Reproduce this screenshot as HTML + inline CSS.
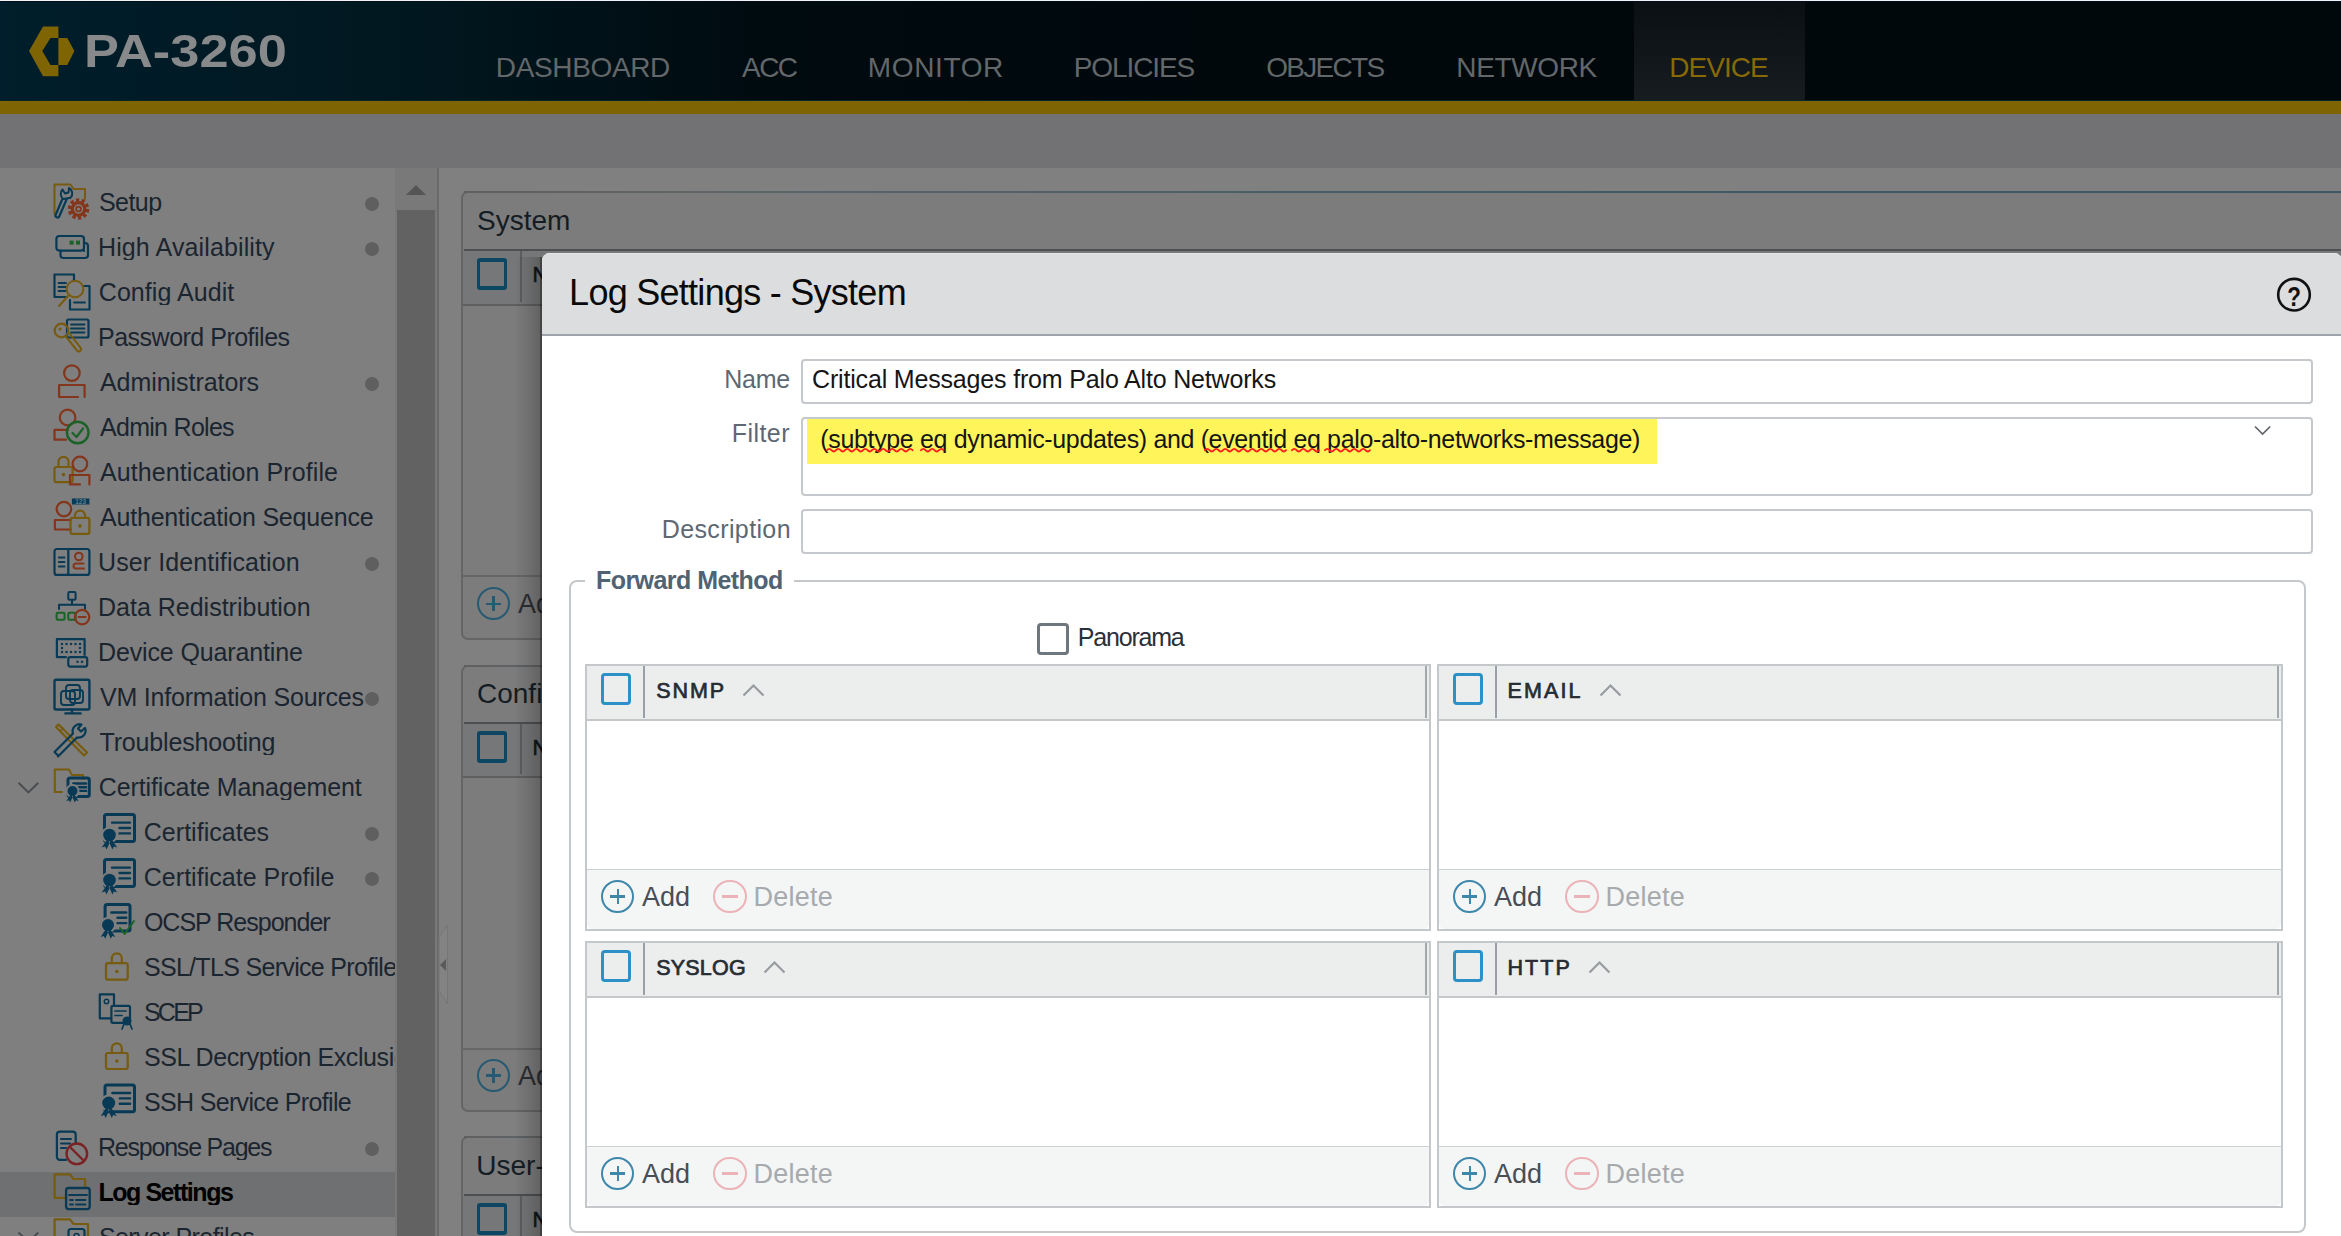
<!DOCTYPE html>
<html><head><meta charset="utf-8"><title>Log Settings - System</title>
<style>
html,body{margin:0;padding:0;}
body{width:2341px;height:1236px;position:relative;overflow:hidden;background:#808080;font-family:"Liberation Sans", sans-serif;}
.t{position:absolute;line-height:1;white-space:nowrap;font-family:"Liberation Sans", sans-serif;}
</style></head><body>
<div style="position:absolute;left:0px;top:0px;width:2341px;height:101px;background:linear-gradient(90deg,#001e2b 0px,#01171f 420px,#000b10 760px,#00080c 1200px,#00080c 2341px);"></div>
<div style="position:absolute;left:1634px;top:0px;width:171px;height:101px;background:linear-gradient(180deg,#090f13 0%,#161c20 100%);"></div>
<div style="position:absolute;left:0px;top:0px;width:2341px;height:1px;background:#f2f2f4;"></div>
<div style="position:absolute;left:0px;top:1px;width:2341px;height:1px;background:#000f1c;"></div>
<div style="position:absolute;left:0px;top:100px;width:2341px;height:1px;background:#06262c;"></div>
<div style="position:absolute;left:0px;top:101px;width:2341px;height:13px;background:#7f6403;"></div>
<div style="position:absolute;left:0px;top:114px;width:2341px;height:54px;background:#727274;"></div>
<svg style="position:absolute;left:0px;top:0px;" width="300" height="100" viewBox="0 0 300 100"><polygon fill="#7f6404" points="43,26.6 58.4,26.6 58.4,38 50.5,38 42.3,51 50.5,65 58.4,65 58.4,76.2 43,76.2 29,51"/><polygon fill="#7f6404" points="58.4,38 67.3,38 74.4,51 67.3,65 58.4,65"/></svg>
<div class="t" style="left:83.6px;top:28.0px;font-size:46.5px;color:#87898a;font-weight:700;letter-spacing:0.00px;transform:scaleX(1.1260);transform-origin:0 0;">PA-3260</div>
<div class="t" style="left:495.8px;top:54.1px;font-size:28px;color:#63676a;font-weight:400;letter-spacing:-0.36px;">DASHBOARD</div>
<div class="t" style="left:742.0px;top:54.1px;font-size:28px;color:#63676a;font-weight:400;letter-spacing:-1.55px;">ACC</div>
<div class="t" style="left:867.8px;top:54.1px;font-size:28px;color:#63676a;font-weight:400;letter-spacing:0.63px;">MONITOR</div>
<div class="t" style="left:1073.8px;top:54.1px;font-size:28px;color:#63676a;font-weight:400;letter-spacing:-1.10px;">POLICIES</div>
<div class="t" style="left:1266.2px;top:54.1px;font-size:28px;color:#63676a;font-weight:400;letter-spacing:-1.70px;">OBJECTS</div>
<div class="t" style="left:1456.3px;top:54.1px;font-size:28px;color:#63676a;font-weight:400;letter-spacing:-0.37px;">NETWORK</div>
<div class="t" style="left:1669.2px;top:54.1px;font-size:28px;color:#876906;font-weight:400;letter-spacing:-0.94px;">DEVICE</div>
<div style="position:absolute;left:0px;top:168px;width:395px;height:1068px;background:#7f7f7f;"></div>
<div style="position:absolute;left:395px;top:168px;width:42px;height:1068px;background:#797979;"></div>
<div style="position:absolute;left:397px;top:210px;width:38px;height:1026px;background:#626262;"></div>
<svg style="position:absolute;left:400px;top:180px;" width="32" height="20" viewBox="0 0 32 20"><polygon fill="#555" points="5.9,15 16,4.9 26.1,15"/></svg>
<div style="position:absolute;left:437px;top:168px;width:2px;height:1068px;background:#6a6a6a;"></div>
<div style="position:absolute;left:0px;top:1172px;width:395px;height:45px;background:#6f7071;"></div>
<div class="t" style="left:98.9px;top:189.8px;font-size:25px;color:#1b2530;font-weight:400;letter-spacing:-0.53px;width:296.1px;overflow:hidden;">Setup</div>
<div style="position:absolute;left:365px;top:197px;width:14px;height:14px;background:#5f5f5f;border-radius:50%;"></div>
<div class="t" style="left:98.0px;top:234.8px;font-size:25px;color:#1b2530;font-weight:400;letter-spacing:0.12px;width:297.0px;overflow:hidden;">High Availability</div>
<div style="position:absolute;left:365px;top:242px;width:14px;height:14px;background:#5f5f5f;border-radius:50%;"></div>
<div class="t" style="left:98.8px;top:279.8px;font-size:25px;color:#1b2530;font-weight:400;letter-spacing:0.06px;width:296.2px;overflow:hidden;">Config Audit</div>
<div class="t" style="left:98.0px;top:324.8px;font-size:25px;color:#1b2530;font-weight:400;letter-spacing:-0.50px;width:297.0px;overflow:hidden;">Password Profiles</div>
<div class="t" style="left:100.0px;top:369.8px;font-size:25px;color:#1b2530;font-weight:400;letter-spacing:-0.05px;width:295.0px;overflow:hidden;">Administrators</div>
<div style="position:absolute;left:365px;top:377px;width:14px;height:14px;background:#5f5f5f;border-radius:50%;"></div>
<div class="t" style="left:100.0px;top:414.8px;font-size:25px;color:#1b2530;font-weight:400;letter-spacing:-0.71px;width:295.0px;overflow:hidden;">Admin Roles</div>
<div class="t" style="left:100.0px;top:459.8px;font-size:25px;color:#1b2530;font-weight:400;letter-spacing:0.08px;width:295.0px;overflow:hidden;">Authentication Profile</div>
<div class="t" style="left:100.0px;top:504.8px;font-size:25px;color:#1b2530;font-weight:400;letter-spacing:-0.20px;width:295.0px;overflow:hidden;">Authentication Sequence</div>
<div class="t" style="left:98.1px;top:549.8px;font-size:25px;color:#1b2530;font-weight:400;letter-spacing:0.08px;width:296.9px;overflow:hidden;">User Identification</div>
<div style="position:absolute;left:365px;top:557px;width:14px;height:14px;background:#5f5f5f;border-radius:50%;"></div>
<div class="t" style="left:98.0px;top:594.8px;font-size:25px;color:#1b2530;font-weight:400;letter-spacing:-0.00px;width:297.0px;overflow:hidden;">Data Redistribution</div>
<div class="t" style="left:98.0px;top:639.8px;font-size:25px;color:#1b2530;font-weight:400;letter-spacing:-0.13px;width:297.0px;overflow:hidden;">Device Quarantine</div>
<div class="t" style="left:100.0px;top:684.8px;font-size:25px;color:#1b2530;font-weight:400;letter-spacing:-0.20px;width:295.0px;overflow:hidden;">VM Information Sources</div>
<div style="position:absolute;left:365px;top:692px;width:14px;height:14px;background:#5f5f5f;border-radius:50%;"></div>
<div class="t" style="left:99.5px;top:729.8px;font-size:25px;color:#1b2530;font-weight:400;letter-spacing:-0.17px;width:295.5px;overflow:hidden;">Troubleshooting</div>
<div class="t" style="left:98.8px;top:774.8px;font-size:25px;color:#1b2530;font-weight:400;letter-spacing:-0.12px;width:296.2px;overflow:hidden;">Certificate Management</div>
<div class="t" style="left:143.8px;top:819.8px;font-size:25px;color:#1b2530;font-weight:400;letter-spacing:0.02px;width:251.2px;overflow:hidden;">Certificates</div>
<div style="position:absolute;left:365px;top:827px;width:14px;height:14px;background:#5f5f5f;border-radius:50%;"></div>
<div class="t" style="left:143.8px;top:864.8px;font-size:25px;color:#1b2530;font-weight:400;letter-spacing:0.02px;width:251.2px;overflow:hidden;">Certificate Profile</div>
<div style="position:absolute;left:365px;top:872px;width:14px;height:14px;background:#5f5f5f;border-radius:50%;"></div>
<div class="t" style="left:143.9px;top:909.8px;font-size:25px;color:#1b2530;font-weight:400;letter-spacing:-0.99px;width:251.1px;overflow:hidden;">OCSP Responder</div>
<div class="t" style="left:143.9px;top:954.8px;font-size:25px;color:#1b2530;font-weight:400;letter-spacing:-0.68px;width:251.1px;overflow:hidden;">SSL/TLS Service Profile</div>
<div class="t" style="left:143.9px;top:999.8px;font-size:25px;color:#1b2530;font-weight:400;letter-spacing:-2.74px;width:251.1px;overflow:hidden;">SCEP</div>
<div class="t" style="left:143.9px;top:1044.8px;font-size:25px;color:#1b2530;font-weight:400;letter-spacing:-0.41px;width:251.1px;overflow:hidden;">SSL Decryption Exclusion</div>
<div class="t" style="left:143.9px;top:1089.8px;font-size:25px;color:#1b2530;font-weight:400;letter-spacing:-0.65px;width:251.1px;overflow:hidden;">SSH Service Profile</div>
<div class="t" style="left:98.0px;top:1134.8px;font-size:25px;color:#1b2530;font-weight:400;letter-spacing:-1.22px;width:297.0px;overflow:hidden;">Response Pages</div>
<div style="position:absolute;left:365px;top:1142px;width:14px;height:14px;background:#5f5f5f;border-radius:50%;"></div>
<div class="t" style="left:98.4px;top:1179.8px;font-size:25px;color:#000000;font-weight:700;letter-spacing:-1.44px;width:296.6px;overflow:hidden;">Log Settings</div>
<div class="t" style="left:98.9px;top:1224.8px;font-size:25px;color:#1b2530;font-weight:400;letter-spacing:-0.57px;width:296.1px;overflow:hidden;">Server Profiles</div>
<svg style="position:absolute;left:0;top:168px" width="395" height="1068" viewBox="0 168 395 1068"><path d="M54.5,214 V184.5 H70.5 L73.5,189 H85 V199" fill="none" stroke="#775b0e" stroke-width="2.04" stroke-linejoin="round" stroke-linecap="round"/><path d="M57.5,215.5 L65,198" fill="none" stroke="#083a56" stroke-width="6.2" stroke-linecap="round"/><path d="M57.5,215.5 L65,198" fill="none" stroke="#7f7f7f" stroke-width="1.8" stroke-linecap="round"/><path d="M63.5,199 a6.2,6.2 0 0 1 -1,-9.5 l2.5,4 l3.5,-1 l0.5,-4.5 a6.2,6.2 0 0 1 1.5,9.8 Z" fill="#7f7f7f" stroke="#083a56" stroke-width="2" stroke-linejoin="round"/><circle cx="78.5" cy="209" r="9" fill="none" stroke="#84361c" stroke-width="3.6" stroke-dasharray="3.3 2.35"/><circle cx="78.5" cy="209" r="6.3" fill="#7f7f7f" stroke="#84361c" stroke-width="3.2"/><circle cx="78.5" cy="209" r="2.4" fill="none" stroke="#84361c" stroke-width="1.8"/><path d="M84,250.6 V251 M60.5,250.6 V255 a3,3 0 0 0 3,3 H85 a3,3 0 0 0 3,-3 V246 a3,3 0 0 0 -3,-3 H84" fill="none" stroke="#083a56" stroke-width="2.21" stroke-linejoin="round" stroke-linecap="round"/><rect x="56.4" y="236" width="27.6" height="14.6" rx="3" fill="none" stroke="#083a56" stroke-width="2.21" stroke-linejoin="round" stroke-linecap="round"/><rect x="69.6" y="240.6" width="4" height="4" fill="#1a6226"/><rect x="76" y="240.6" width="4" height="4" fill="#1a6226"/><path d="M66,297 H54.5 V274.5 H74 V281" fill="none" stroke="#083a56" stroke-width="2.21" stroke-linejoin="round" stroke-linecap="round"/><path d="M58.5,283 H66 M58.5,287 H66 M58.5,291 H66" fill="none" stroke="#083a56" stroke-width="1.87" stroke-linejoin="round" stroke-linecap="round"/><path d="M83,286 H89.5 V309.5 H70 V300" fill="none" stroke="#083a56" stroke-width="2.21" stroke-linejoin="round" stroke-linecap="round"/><path d="M74,302.5 H85" fill="none" stroke="#083a56" stroke-width="1.87" stroke-linejoin="round" stroke-linecap="round"/><circle cx="75" cy="289" r="8.3" fill="none" stroke="#775b0e" stroke-width="2.04" stroke-linejoin="round" stroke-linecap="round"/><path d="M68.5,295.5 L59,306" fill="none" stroke="#775b0e" stroke-width="2.04" stroke-linejoin="round" stroke-linecap="round"/><rect x="67" y="319.5" width="21.5" height="18" rx="1.5" fill="none" stroke="#083a56" stroke-width="2.21" stroke-linejoin="round" stroke-linecap="round"/><path d="M71,324.5 H84.5 M71,328.5 H84.5 M71,332.5 H84.5" fill="none" stroke="#083a56" stroke-width="1.87" stroke-linejoin="round" stroke-linecap="round"/><circle cx="61.5" cy="330.5" r="6.8" fill="none" stroke="#775b0e" stroke-width="2.21" stroke-linejoin="round" stroke-linecap="round"/><path d="M65.5,336 L77,350.5 a2.2,2.2 0 0 0 3.5,-2.8 L69.5,333.5" fill="none" stroke="#775b0e" stroke-width="2.04" stroke-linejoin="round" stroke-linecap="round"/><circle cx="60" cy="329" r="1.6" fill="#775b0e"/><circle cx="71.9" cy="373.1" r="7.8" fill="none" stroke="#84361c" stroke-width="2.21" stroke-linejoin="round" stroke-linecap="round"/><path d="M78,397 H59.1 V385 H84.6 V397" fill="none" stroke="#84361c" stroke-width="2.21" stroke-linejoin="round" stroke-linecap="round"/><circle cx="67.6" cy="417.5" r="7.8" fill="none" stroke="#84361c" stroke-width="2.21" stroke-linejoin="round" stroke-linecap="round"/><path d="M66,439.7 H54.5 V429.8 H68" fill="none" stroke="#84361c" stroke-width="2.21" stroke-linejoin="round" stroke-linecap="round"/><circle cx="77.7" cy="432.5" r="10.8" fill="none" stroke="#1a6226" stroke-width="2.38" stroke-linejoin="round" stroke-linecap="round"/><path d="M72.5,433 L76.5,437 L83,428.5" fill="none" stroke="#1a6226" stroke-width="2.21" stroke-linejoin="round" stroke-linecap="round"/><path d="M58.5,467 V461.8 A5,5 0 0 1 68.5,461.8 V467" fill="none" stroke="#775b0e" stroke-width="2.21" stroke-linejoin="round" stroke-linecap="round"/><rect x="54.5" y="467" width="18.099999999999994" height="15.199999999999989" rx="2" fill="none" stroke="#775b0e" stroke-width="2.21" stroke-linejoin="round" stroke-linecap="round"/><circle cx="63.5" cy="474.6" r="1.8" fill="#775b0e"/><circle cx="79.9" cy="464" r="7.3" fill="none" stroke="#84361c" stroke-width="2.21" stroke-linejoin="round" stroke-linecap="round"/><path d="M80,484.4 H70 V475 H89.4 V484.4" fill="none" stroke="#84361c" stroke-width="2.21" stroke-linejoin="round" stroke-linecap="round"/><circle cx="63.9" cy="509.1" r="7.3" fill="none" stroke="#84361c" stroke-width="2.21" stroke-linejoin="round" stroke-linecap="round"/><path d="M71,520 H54.9 V529.5 H71" fill="none" stroke="#84361c" stroke-width="2.21" stroke-linejoin="round" stroke-linecap="round"/><path d="M75,517.9 V515.6 A5,5 0 0 1 85,515.6 V517.9" fill="none" stroke="#775b0e" stroke-width="2.21" stroke-linejoin="round" stroke-linecap="round"/><rect x="70.5" y="517.9" width="18.900000000000006" height="16.0" rx="2" fill="none" stroke="#775b0e" stroke-width="2.21" stroke-linejoin="round" stroke-linecap="round"/><circle cx="80" cy="525.9" r="1.8" fill="#775b0e"/><rect x="71.9" y="498.5" width="17.5" height="6" fill="#083a56"/><text x="80.6" y="504" text-anchor="middle" font-family="Liberation Sans" font-weight="700" font-size="6.5" fill="#5a7d90">123</text><rect x="54.5" y="549" width="34.9" height="25.9" rx="2.5" fill="none" stroke="#083a56" stroke-width="2.21" stroke-linejoin="round" stroke-linecap="round"/><path d="M68.3,549 V574.9" fill="none" stroke="#083a56" stroke-width="2.21" stroke-linejoin="round" stroke-linecap="round"/><path d="M58.8,557.5 H64.5 M58.8,562 H64.5 M58.8,566.5 H64.5" fill="none" stroke="#083a56" stroke-width="1.87" stroke-linejoin="round" stroke-linecap="round"/><circle cx="78.8" cy="556.5" r="3.8" fill="none" stroke="#84361c" stroke-width="2.04" stroke-linejoin="round" stroke-linecap="round"/><path d="M83.5,563.5 H76 a2.5,2.5 0 0 0 0,5 H84" fill="none" stroke="#84361c" stroke-width="2.04" stroke-linejoin="round" stroke-linecap="round"/><rect x="68.3" y="592" width="7.3" height="7.7" rx="1.2" fill="none" stroke="#083a56" stroke-width="2.04" stroke-linejoin="round" stroke-linecap="round"/><path d="M72,599.7 V604.7 M59,609 V604.7 H85 V609" fill="none" stroke="#083a56" stroke-width="2.04" stroke-linejoin="round" stroke-linecap="round"/><rect x="56.6" y="612.7" width="8" height="7" rx="1.2" fill="none" stroke="#1a6226" stroke-width="2.04" stroke-linejoin="round" stroke-linecap="round"/><rect x="68.3" y="612.7" width="7.3" height="7" rx="1.2" fill="none" stroke="#1a6226" stroke-width="2.04" stroke-linejoin="round" stroke-linecap="round"/><circle cx="82.1" cy="617.1" r="7.2" fill="none" stroke="#84361c" stroke-width="2.21" stroke-linejoin="round" stroke-linecap="round"/><path d="M78.5,617.1 H85.7" fill="none" stroke="#84361c" stroke-width="2.04" stroke-linejoin="round" stroke-linecap="round"/><path d="M66,657.1 H56.9 V639.2 H84.6 V655" fill="none" stroke="#083a56" stroke-width="2.21" stroke-linejoin="round" stroke-linecap="round"/><rect x="68.3" y="657.1" width="18.9" height="9.5" rx="2" fill="none" stroke="#083a56" stroke-width="2.21" stroke-linejoin="round" stroke-linecap="round"/><rect x="60.9" y="642.9" width="2.2" height="2.2" fill="#083a56"/><rect x="60.9" y="650.9" width="2.2" height="2.2" fill="#083a56"/><rect x="65.4" y="642.9" width="2.2" height="2.2" fill="#083a56"/><rect x="65.4" y="650.9" width="2.2" height="2.2" fill="#083a56"/><rect x="69.9" y="642.9" width="2.2" height="2.2" fill="#083a56"/><rect x="69.9" y="650.9" width="2.2" height="2.2" fill="#083a56"/><rect x="74.4" y="642.9" width="2.2" height="2.2" fill="#083a56"/><rect x="74.4" y="650.9" width="2.2" height="2.2" fill="#083a56"/><rect x="78.9" y="642.9" width="2.2" height="2.2" fill="#083a56"/><rect x="78.9" y="650.9" width="2.2" height="2.2" fill="#083a56"/><rect x="60.9" y="646.9" width="2.2" height="2.2" fill="#083a56"/><rect x="78.9" y="646.9" width="2.2" height="2.2" fill="#083a56"/><rect x="76.4" y="660.7" width="2.2" height="2.2" fill="#083a56"/><rect x="80.9" y="660.7" width="2.2" height="2.2" fill="#083a56"/><rect x="54.5" y="679.7" width="34.9" height="29.8" rx="1.5" fill="none" stroke="#083a56" stroke-width="2.38" stroke-linejoin="round" stroke-linecap="round"/><path d="M72,709.5 V713.4 M65.4,713.4 H80.6" fill="none" stroke="#083a56" stroke-width="2.38" stroke-linejoin="round" stroke-linecap="round"/><rect x="61" y="691" width="14" height="14" rx="3" fill="none" stroke="#083a56" stroke-width="1.87" stroke-linejoin="round" stroke-linecap="round"/><rect x="66" y="685" width="14" height="14" rx="3" fill="none" stroke="#083a56" stroke-width="1.87" stroke-linejoin="round" stroke-linecap="round"/><rect x="70" y="690" width="13" height="13" rx="3" fill="none" stroke="#083a56" stroke-width="1.87" stroke-linejoin="round" stroke-linecap="round"/><path d="M56,727 L58.5,724.5 L87,752.5 L84,755.5 Z" fill="none" stroke="#775b0e" stroke-width="2.21" stroke-linejoin="round" stroke-linecap="round"/><path d="M60,731 L63,728" fill="none" stroke="#775b0e" stroke-width="1.7" stroke-linejoin="round" stroke-linecap="round"/><path d="M57.5,755 L54.5,752 L73,733.5 M77,737.5 L58,756.5 M73,733.5 a7,7 0 0 1 8.5,-9 L78,728.5 L81,731.5 L85,728 a7,7 0 0 1 -8,9.5" fill="none" stroke="#083a56" stroke-width="2.21" stroke-linejoin="round" stroke-linecap="round"/><path d="M18.5,782.8 L28.4,792.4 L38.3,782.8" fill="none" stroke="#4a4d50" stroke-width="2"/><path d="M54.8,792 V769.5 H69 L72,775 H83 V779" fill="none" stroke="#775b0e" stroke-width="2.04" stroke-linejoin="round" stroke-linecap="round"/><path d="M54.8,792 H62" fill="none" stroke="#775b0e" stroke-width="2.04" stroke-linejoin="round" stroke-linecap="round"/><rect x="68" y="778" width="21.299999999999997" height="18.399999999999977" rx="2" fill="none" stroke="#083a56" stroke-width="3.0" stroke-linejoin="round" stroke-linecap="round"/><path d="M73.3,783.5 H86.1 M78.7,787.2 H86.1 M78.7,790.9 H86.1" fill="none" stroke="#083a56" stroke-width="2.4" stroke-linejoin="round" stroke-linecap="round"/><circle cx="72.5" cy="791" r="7" fill="#7f7f7f"/><circle cx="72.5" cy="791" r="5" fill="#083a56"/><path d="M71.0,794.1 L66.3,801.0 L69.0,800.2 L70.2,802.5 L73.3,795.6 Z M74.0,794.1 L78.7,801.0 L76.0,800.2 L74.8,802.5 L71.7,795.6 Z" fill="#083a56"/><rect x="104.5" y="814.5" width="30.0" height="27.0" rx="2" fill="none" stroke="#083a56" stroke-width="3.0" stroke-linejoin="round" stroke-linecap="round"/><path d="M112.0,822.6 H130.0 M119.5,828.0 H130.0 M119.5,833.4 H130.0" fill="none" stroke="#083a56" stroke-width="2.4" stroke-linejoin="round" stroke-linecap="round"/><circle cx="109.5" cy="835" r="8.3" fill="#7f7f7f"/><circle cx="109.5" cy="835" r="6.3" fill="#083a56"/><path d="M107.6,838.9 L101.7,847.6 L105.1,846.6 L106.6,849.5 L110.5,840.8 Z M111.4,838.9 L117.3,847.6 L113.9,846.6 L112.4,849.5 L108.5,840.8 Z" fill="#083a56"/><rect x="104.5" y="859.5" width="30.0" height="27.0" rx="2" fill="none" stroke="#083a56" stroke-width="3.0" stroke-linejoin="round" stroke-linecap="round"/><path d="M112.0,867.6 H130.0 M119.5,873.0 H130.0 M119.5,878.4 H130.0" fill="none" stroke="#083a56" stroke-width="2.4" stroke-linejoin="round" stroke-linecap="round"/><circle cx="109.5" cy="880" r="8.3" fill="#7f7f7f"/><circle cx="109.5" cy="880" r="6.3" fill="#083a56"/><path d="M107.6,883.9 L101.7,892.6 L105.1,891.6 L106.6,894.5 L110.5,885.8 Z M111.4,883.9 L117.3,892.6 L113.9,891.6 L112.4,894.5 L108.5,885.8 Z" fill="#083a56"/><rect x="105.1" y="904.5" width="24.900000000000006" height="26.600000000000023" rx="2" fill="none" stroke="#083a56" stroke-width="3.0" stroke-linejoin="round" stroke-linecap="round"/><path d="M111.3,912.5 H126.3 M117.5,917.8 H126.3 M117.5,923.1 H126.3" fill="none" stroke="#083a56" stroke-width="2.4" stroke-linejoin="round" stroke-linecap="round"/><circle cx="108" cy="925" r="8" fill="#7f7f7f"/><circle cx="108" cy="925" r="6" fill="#083a56"/><path d="M106.2,928.7 L100.6,937.0 L103.8,936.1 L105.2,938.8 L108.9,930.5 Z M109.8,928.7 L115.4,937.0 L112.2,936.1 L110.8,938.8 L107.1,930.5 Z" fill="#083a56"/><path d="M120,928 L124.5,934 L134,921" fill="none" stroke="#1a6226" stroke-width="2.04" stroke-linejoin="round" stroke-linecap="round"/><path d="M111.8,963.2 V958.4 A5,5 0 0 1 121.8,958.4 V963.2" fill="none" stroke="#775b0e" stroke-width="2.21" stroke-linejoin="round" stroke-linecap="round"/><rect x="106" y="963.2" width="21.700000000000003" height="16.5" rx="2" fill="none" stroke="#775b0e" stroke-width="2.21" stroke-linejoin="round" stroke-linecap="round"/><circle cx="116.8" cy="971.45" r="1.8" fill="#775b0e"/><path d="M111,1018.4 H99.8 V994.3 H114 V1005" fill="none" stroke="#083a56" stroke-width="2.21" stroke-linejoin="round" stroke-linecap="round"/><circle cx="106.5" cy="1001.5" r="2.2" fill="none" stroke="#083a56" stroke-width="1.53" stroke-linejoin="round" stroke-linecap="round"/><rect x="111.4" y="1005.9" width="18.6" height="16.9" rx="1.5" fill="none" stroke="#083a56" stroke-width="2.21" stroke-linejoin="round" stroke-linecap="round"/><path d="M115,1011 H126 M115,1015.5 H122" fill="none" stroke="#083a56" stroke-width="1.7" stroke-linejoin="round" stroke-linecap="round"/><circle cx="127" cy="1021" r="4.5" fill="#083a56"/><path d="M124,1024 L122,1029 M130,1024 L132,1029" fill="none" stroke="#083a56" stroke-width="1.7" stroke-linejoin="round" stroke-linecap="round"/><path d="M111.8,1053 V1048.4 A5,5 0 0 1 121.8,1048.4 V1053" fill="none" stroke="#775b0e" stroke-width="2.21" stroke-linejoin="round" stroke-linecap="round"/><rect x="106" y="1053" width="21.700000000000003" height="16" rx="2" fill="none" stroke="#775b0e" stroke-width="2.21" stroke-linejoin="round" stroke-linecap="round"/><circle cx="116.8" cy="1061.0" r="1.8" fill="#775b0e"/><rect x="105" y="1085" width="29.5" height="26.799999999999955" rx="2" fill="none" stroke="#083a56" stroke-width="3.0" stroke-linejoin="round" stroke-linecap="round"/><path d="M112.4,1093.0 H130.1 M119.8,1098.4 H130.1 M119.8,1103.8 H130.1" fill="none" stroke="#083a56" stroke-width="2.4" stroke-linejoin="round" stroke-linecap="round"/><circle cx="108.7" cy="1103" r="8.5" fill="#7f7f7f"/><circle cx="108.7" cy="1103" r="6.5" fill="#083a56"/><path d="M106.7,1107.0 L100.7,1116.0 L104.2,1115.0 L105.7,1118.0 L109.7,1109.0 Z M110.7,1107.0 L116.7,1116.0 L113.2,1115.0 L111.7,1118.0 L107.7,1109.0 Z" fill="#083a56"/><path d="M66,1159.9 H59.9 a3,3 0 0 1 -3,-3 V1134.7 a3,3 0 0 1 3,-3 H72.7 a3,3 0 0 1 3,3 V1143" fill="none" stroke="#083a56" stroke-width="2.21" stroke-linejoin="round" stroke-linecap="round"/><path d="M61,1139 H71 M61,1143.5 H70 M61,1148 H66" fill="none" stroke="#083a56" stroke-width="2.04" stroke-linejoin="round" stroke-linecap="round"/><circle cx="76.8" cy="1153.8" r="10.3" fill="none" stroke="#7a2224" stroke-width="2.38" stroke-linejoin="round" stroke-linecap="round"/><path d="M70,1147 L83.5,1160.5" fill="none" stroke="#7a2224" stroke-width="2.38" stroke-linejoin="round" stroke-linecap="round"/><path d="M66,1197.9 H54.6 V1174.4 H70 L73.5,1179 H85 V1188" fill="none" stroke="#775b0e" stroke-width="2.21" stroke-linejoin="round" stroke-linecap="round"/><rect x="66.1" y="1188" width="23.6" height="21.1" rx="2.5" fill="none" stroke="#083a56" stroke-width="2.38" stroke-linejoin="round" stroke-linecap="round"/><path d="M69,1195 H87 M70,1200 H73 M76,1200 H85.5 M70,1204.5 H73 M76,1204.5 H85.5" fill="none" stroke="#083a56" stroke-width="1.87" stroke-linejoin="round" stroke-linecap="round"/><path d="M18.5,1232.5 L28.4,1242 L38.3,1232.5" fill="none" stroke="#4a4d50" stroke-width="2"/><path d="M54.6,1240 V1219.4 H70 L73.5,1224 H88 V1240" fill="none" stroke="#775b0e" stroke-width="2.21" stroke-linejoin="round" stroke-linecap="round"/><rect x="68.5" y="1229" width="16" height="12" rx="2.5" fill="none" stroke="#083a56" stroke-width="2.21" stroke-linejoin="round" stroke-linecap="round"/><circle cx="76.5" cy="1236" r="2.5" fill="none" stroke="#083a56" stroke-width="1.7" stroke-linejoin="round" stroke-linecap="round"/></svg>
<div style="position:absolute;left:439px;top:168px;width:1902px;height:1068px;background:#808080;"></div>
<svg style="position:absolute;left:437px;top:920px;" width="14" height="90" viewBox="0 0 14 90"><polygon fill="#838383" stroke="#767676" stroke-width="1" points="2,17 10.5,5 10.5,84 2,71"/><polygon fill="#5a5a5a" points="9,39 3,45 9,51"/></svg>
<div style="position:absolute;left:461px;top:191px;width:1900px;height:449px;border:2px solid #646567;border-radius:7px;box-sizing:border-box;background:#7c7c7c;"></div>
<div style="position:absolute;left:464px;top:191px;width:1900px;height:2px;background:linear-gradient(90deg,#5e6062 0px,#5f6568 240px,#4b5f69 760px,#405865 1300px,#3e5663 1900px);"></div>
<div class="t" style="left:477.1px;top:207.1px;font-size:28px;color:#141c24;font-weight:400;letter-spacing:0.00px;">System</div>
<div style="position:absolute;left:464px;top:249px;width:1900px;height:2px;background:#4e4f51;"></div>
<div style="position:absolute;left:463px;top:251px;width:1900px;height:53px;background:#767778;"></div>
<div style="position:absolute;left:463px;top:304px;width:1900px;height:2px;background:#5e5f61;"></div>
<div style="position:absolute;left:520px;top:251px;width:2px;height:51px;background:#5c5d5f;"></div>
<div style="position:absolute;left:477px;top:258px;width:30px;height:31.7px;border:3.2px solid #0d4663;border-top-width:4.2px;border-bottom-width:4.2px;border-radius:3px;box-sizing:border-box;"></div>
<div class="t" style="left:532.5px;top:265.4px;font-size:21.5px;color:#10161c;font-weight:400;letter-spacing:0.00px;-webkit-text-stroke:0.6px #10161c;">N</div>
<div style="position:absolute;left:463px;top:575px;width:1900px;height:2px;background:#666769;"></div>
<div style="position:absolute;left:477px;top:587.2px;width:33px;height:33px;border:2.4px solid #265a72;border-radius:50%;box-sizing:border-box;"></div>
<div style="position:absolute;left:486px;top:602.6px;width:15px;height:2.2px;background:#265a72;"></div>
<div style="position:absolute;left:492.4px;top:596.2px;width:2.2px;height:15px;background:#265a72;"></div>
<div class="t" style="left:518.0px;top:590.8px;font-size:27px;color:#2a2e32;font-weight:400;letter-spacing:0.00px;">Add</div>
<div style="position:absolute;left:461px;top:665px;width:1900px;height:447px;border:2px solid #646567;border-radius:7px;box-sizing:border-box;background:#7c7c7c;"></div>
<div style="position:absolute;left:464px;top:665px;width:1900px;height:2px;background:linear-gradient(90deg,#5e6062 0px,#5f6568 240px,#4b5f69 760px,#405865 1300px,#3e5663 1900px);"></div>
<div class="t" style="left:477.0px;top:679.9px;font-size:28px;color:#141c24;font-weight:400;letter-spacing:0.00px;">Config Audit</div>
<div style="position:absolute;left:464px;top:722px;width:1900px;height:2px;background:#4e4f51;"></div>
<div style="position:absolute;left:463px;top:724px;width:1900px;height:52px;background:#767778;"></div>
<div style="position:absolute;left:463px;top:776px;width:1900px;height:2px;background:#5e5f61;"></div>
<div style="position:absolute;left:520px;top:724px;width:2px;height:50px;background:#5c5d5f;"></div>
<div style="position:absolute;left:477px;top:731px;width:30px;height:31.7px;border:3.2px solid #0d4663;border-top-width:4.2px;border-bottom-width:4.2px;border-radius:3px;box-sizing:border-box;"></div>
<div class="t" style="left:532.5px;top:738.4px;font-size:21.5px;color:#10161c;font-weight:400;letter-spacing:0.00px;-webkit-text-stroke:0.6px #10161c;">N</div>
<div style="position:absolute;left:463px;top:1048px;width:1900px;height:2px;background:#666769;"></div>
<div style="position:absolute;left:477px;top:1059.0px;width:33px;height:33px;border:2.4px solid #265a72;border-radius:50%;box-sizing:border-box;"></div>
<div style="position:absolute;left:486px;top:1074.4px;width:15px;height:2.2px;background:#265a72;"></div>
<div style="position:absolute;left:492.4px;top:1068.0px;width:2.2px;height:15px;background:#265a72;"></div>
<div class="t" style="left:518.0px;top:1062.6px;font-size:27px;color:#2a2e32;font-weight:400;letter-spacing:0.00px;">Add</div>
<div style="position:absolute;left:461px;top:1136px;width:1900px;height:164px;border:2px solid #646567;border-radius:7px;box-sizing:border-box;background:#7c7c7c;"></div>
<div style="position:absolute;left:464px;top:1136px;width:1900px;height:2px;background:linear-gradient(90deg,#5e6062 0px,#5f6568 240px,#4b5f69 760px,#405865 1300px,#3e5663 1900px);"></div>
<div class="t" style="left:476.3px;top:1151.8px;font-size:28px;color:#141c24;font-weight:400;letter-spacing:0.00px;">User-ID</div>
<div style="position:absolute;left:464px;top:1194px;width:1900px;height:2px;background:#4e4f51;"></div>
<div style="position:absolute;left:463px;top:1196px;width:1900px;height:53px;background:#767778;"></div>
<div style="position:absolute;left:463px;top:1249px;width:1900px;height:2px;background:#5e5f61;"></div>
<div style="position:absolute;left:520px;top:1196px;width:2px;height:51px;background:#5c5d5f;"></div>
<div style="position:absolute;left:477px;top:1203px;width:30px;height:31.7px;border:3.2px solid #0d4663;border-top-width:4.2px;border-bottom-width:4.2px;border-radius:3px;box-sizing:border-box;"></div>
<div class="t" style="left:532.5px;top:1210.4px;font-size:21.5px;color:#10161c;font-weight:400;letter-spacing:0.00px;-webkit-text-stroke:0.6px #10161c;">N</div>
<div style="position:absolute;left:514px;top:257px;width:28px;height:979px;background:linear-gradient(90deg,rgba(0,0,0,0) 0%,rgba(0,0,0,.08) 40%,rgba(0,0,0,.22) 100%);"></div>
<div style="position:absolute;left:540px;top:257px;width:2px;height:979px;background:rgba(0,0,0,.3);"></div>
<div style="position:absolute;left:542px;top:253px;width:1800px;height:1100px;background:#fff;border-radius:8px 8px 0 0;overflow:hidden">
<div style="position:absolute;left:0;top:0;width:1800px;height:81px;background:#dcdddf;border-bottom:2px solid #9ea4a9;"></div>
<div style="position:absolute;left:0;top:0;width:1800px;height:1px;background:#e6e7e9;"></div>
</div>
<div class="t" style="left:569.1px;top:274.5px;font-size:36px;color:#0a0a0a;font-weight:400;letter-spacing:-0.73px;">Log Settings - System</div>
<svg style="position:absolute;left:2275px;top:276px;" width="38" height="38" viewBox="0 0 38 38"><circle cx="19" cy="18.7" r="15.8" fill="none" stroke="#111" stroke-width="2.6"/><text x="19" y="29.6" transform="translate(19,0) scale(0.8,1) translate(-19,0)" text-anchor="middle" font-family="Liberation Sans" font-weight="700" font-size="28" fill="#111">?</text></svg>
<div class="t" style="left:724.3px;top:366.5px;font-size:25px;color:#5d6873;font-weight:400;letter-spacing:-0.24px;">Name</div>
<div class="t" style="left:731.8px;top:420.6px;font-size:25px;color:#5d6873;font-weight:400;letter-spacing:0.43px;">Filter</div>
<div class="t" style="left:661.8px;top:517.4px;font-size:25px;color:#5d6873;font-weight:400;letter-spacing:0.37px;">Description</div>
<div style="position:absolute;left:801px;top:359px;width:1512px;height:45px;border:2px solid #c5c8cc;border-radius:4px;box-sizing:border-box;background:#fff;"></div>
<div style="position:absolute;left:801px;top:417px;width:1512px;height:79px;border:2px solid #c5c8cc;border-radius:4px;box-sizing:border-box;background:#fff;"></div>
<div style="position:absolute;left:801px;top:509px;width:1512px;height:45px;border:2px solid #c5c8cc;border-radius:4px;box-sizing:border-box;background:#fff;"></div>
<div class="t" style="left:812.0px;top:366.5px;font-size:25px;color:#151515;font-weight:400;letter-spacing:-0.17px;">Critical Messages from Palo Alto Networks</div>
<div style="position:absolute;left:807px;top:419px;width:850px;height:45px;background:#fff55a;"></div>
<div class="t" style="left:820.3px;top:426.6px;font-size:25px;color:#151515;font-weight:400;letter-spacing:-0.35px;">(subtype eq dynamic-updates) and (eventid eq palo-alto-networks-message)</div>
<svg style="position:absolute;left:0;top:0" width="2341" height="500"><path fill="none" stroke="#ff1f1f" stroke-width="1.9" stroke-linecap="round" d="M827.0,450.2 Q829.25,447.6 831.50,450.2 Q833.75,452.8 836.00,450.2 Q838.25,447.6 840.50,450.2 Q842.75,452.8 845.00,450.2 Q847.25,447.6 849.50,450.2 Q851.75,452.8 854.00,450.2 Q856.25,447.6 858.50,450.2 Q860.75,452.8 863.00,450.2 Q865.25,447.6 867.50,450.2 Q869.75,452.8 872.00,450.2 Q874.25,447.6 876.50,450.2 Q878.75,452.8 881.00,450.2 Q883.25,447.6 885.50,450.2 Q887.75,452.8 890.00,450.2 Q892.25,447.6 894.50,450.2 Q896.75,452.8 899.00,450.2 Q901.25,447.6 903.50,450.2 Q905.75,452.8 908.00,450.2 Q910.25,447.6 912.50,450.2"/><path fill="none" stroke="#ff1f1f" stroke-width="1.9" stroke-linecap="round" d="M921.0,450.2 Q923.25,447.6 925.50,450.2 Q927.75,452.8 930.00,450.2 Q932.25,447.6 934.50,450.2 Q936.75,452.8 939.00,450.2 Q941.25,447.6 943.50,450.2"/><path fill="none" stroke="#ff1f1f" stroke-width="1.9" stroke-linecap="round" d="M1205.0,450.2 Q1207.25,447.6 1209.50,450.2 Q1211.75,452.8 1214.00,450.2 Q1216.25,447.6 1218.50,450.2 Q1220.75,452.8 1223.00,450.2 Q1225.25,447.6 1227.50,450.2 Q1229.75,452.8 1232.00,450.2 Q1234.25,447.6 1236.50,450.2 Q1238.75,452.8 1241.00,450.2 Q1243.25,447.6 1245.50,450.2 Q1247.75,452.8 1250.00,450.2 Q1252.25,447.6 1254.50,450.2 Q1256.75,452.8 1259.00,450.2 Q1261.25,447.6 1263.50,450.2 Q1265.75,452.8 1268.00,450.2 Q1270.25,447.6 1272.50,450.2 Q1274.75,452.8 1277.00,450.2 Q1279.25,447.6 1281.50,450.2 Q1283.75,452.8 1286.00,450.2"/><path fill="none" stroke="#ff1f1f" stroke-width="1.9" stroke-linecap="round" d="M1292.0,450.2 Q1294.25,447.6 1296.50,450.2 Q1298.75,452.8 1301.00,450.2 Q1303.25,447.6 1305.50,450.2 Q1307.75,452.8 1310.00,450.2 Q1312.25,447.6 1314.50,450.2 Q1316.75,452.8 1319.00,450.2"/><path fill="none" stroke="#ff1f1f" stroke-width="1.9" stroke-linecap="round" d="M1325.0,450.2 Q1327.25,447.6 1329.50,450.2 Q1331.75,452.8 1334.00,450.2 Q1336.25,447.6 1338.50,450.2 Q1340.75,452.8 1343.00,450.2 Q1345.25,447.6 1347.50,450.2 Q1349.75,452.8 1352.00,450.2 Q1354.25,447.6 1356.50,450.2 Q1358.75,452.8 1361.00,450.2 Q1363.25,447.6 1365.50,450.2 Q1367.75,452.8 1370.00,450.2"/></svg>
<svg style="position:absolute;left:2250px;top:420px;" width="26" height="20" viewBox="0 0 26 20"><polyline fill="none" stroke="#60656b" stroke-width="1.7" points="5,6.5 12.6,14 20.2,6.5"/></svg>
<div style="position:absolute;left:569px;top:580px;width:1737px;height:653px;border:2px solid #c5c8cb;border-radius:8px;box-sizing:border-box;"></div>
<div style="position:absolute;left:585px;top:570px;width:209px;height:20px;background:#fff;"></div>
<div class="t" style="left:596.0px;top:568.0px;font-size:25px;color:#4f6373;font-weight:700;letter-spacing:-0.55px;">Forward Method</div>
<div style="position:absolute;left:1037px;top:623px;width:32px;height:32px;border:3px solid #6f777e;border-radius:4px;box-sizing:border-box;"></div>
<div class="t" style="left:1077.8px;top:624.7px;font-size:25px;color:#2a3038;font-weight:400;letter-spacing:-1.20px;">Panorama</div>
<div style="position:absolute;left:585px;top:664px;width:846px;height:267px;border:2px solid #c5c8cb;box-sizing:border-box;background:#fff;"></div>
<div style="position:absolute;left:587px;top:666px;width:842px;height:53px;background:#eceded;"></div>
<div style="position:absolute;left:587px;top:719px;width:842px;height:2px;background:#c5c8cb;"></div>
<div style="position:absolute;left:643px;top:666px;width:2px;height:52px;background:#9aa0a5;"></div>
<div style="position:absolute;left:1425px;top:666px;width:2px;height:52px;background:#a3a8ac;"></div>
<div style="position:absolute;left:601px;top:673px;width:30px;height:31.5px;border:3px solid #2b91c7;border-radius:4px;box-sizing:border-box;"></div>
<div class="t" style="left:656.2px;top:681.1px;font-size:21.5px;color:#262c33;font-weight:400;letter-spacing:1.94px;-webkit-text-stroke:0.7px #262c33;">SNMP</div>
<svg style="position:absolute;left:742px;top:683px;" width="24" height="16" viewBox="0 0 24 16"><polyline fill="none" stroke="#979ca0" stroke-width="2.2" points="1.5,12.5 11.5,2.5 21.5,12.5"/></svg>
<div style="position:absolute;left:587px;top:869px;width:842px;height:1px;background:#cfd2d4;"></div>
<div style="position:absolute;left:587px;top:870px;width:842px;height:59px;background:#f4f5f5;border-radius:0 0 6px 6px;"></div>
<div style="position:absolute;left:601px;top:879.9px;width:33.2px;height:33.2px;border:2.3px solid #3d87ab;border-radius:50%;box-sizing:border-box;"></div>
<div style="position:absolute;left:609.8px;top:895.4px;width:15.2px;height:2.2px;background:#3d87ab;"></div>
<div style="position:absolute;left:616.5px;top:888.8px;width:2.2px;height:15.2px;background:#3d87ab;"></div>
<div class="t" style="left:642.0px;top:883.8px;font-size:27px;color:#474e55;font-weight:400;letter-spacing:-0.07px;">Add</div>
<div style="position:absolute;left:713.4px;top:879.9px;width:33.2px;height:33.2px;border:2.1px solid #ebb3b7;border-radius:50%;box-sizing:border-box;"></div>
<div style="position:absolute;left:722px;top:895.4px;width:16px;height:2.2px;background:#ebb3b7;"></div>
<div class="t" style="left:753.6px;top:883.8px;font-size:27px;color:#a7aaad;font-weight:400;letter-spacing:0.24px;">Delete</div>
<div style="position:absolute;left:1437px;top:664px;width:846px;height:267px;border:2px solid #c5c8cb;box-sizing:border-box;background:#fff;"></div>
<div style="position:absolute;left:1439px;top:666px;width:842px;height:53px;background:#eceded;"></div>
<div style="position:absolute;left:1439px;top:719px;width:842px;height:2px;background:#c5c8cb;"></div>
<div style="position:absolute;left:1495px;top:666px;width:2px;height:52px;background:#9aa0a5;"></div>
<div style="position:absolute;left:2277px;top:666px;width:2px;height:52px;background:#a3a8ac;"></div>
<div style="position:absolute;left:1453px;top:673px;width:30px;height:31.5px;border:3px solid #2b91c7;border-radius:4px;box-sizing:border-box;"></div>
<div class="t" style="left:1507.5px;top:681.1px;font-size:21.5px;color:#262c33;font-weight:400;letter-spacing:2.14px;-webkit-text-stroke:0.7px #262c33;">EMAIL</div>
<svg style="position:absolute;left:1598.9px;top:683px;" width="24" height="16" viewBox="0 0 24 16"><polyline fill="none" stroke="#979ca0" stroke-width="2.2" points="1.5,12.5 11.5,2.5 21.5,12.5"/></svg>
<div style="position:absolute;left:1439px;top:869px;width:842px;height:1px;background:#cfd2d4;"></div>
<div style="position:absolute;left:1439px;top:870px;width:842px;height:59px;background:#f4f5f5;border-radius:0 0 6px 6px;"></div>
<div style="position:absolute;left:1453px;top:879.9px;width:33.2px;height:33.2px;border:2.3px solid #3d87ab;border-radius:50%;box-sizing:border-box;"></div>
<div style="position:absolute;left:1461.8px;top:895.4px;width:15.2px;height:2.2px;background:#3d87ab;"></div>
<div style="position:absolute;left:1468.5px;top:888.8px;width:2.2px;height:15.2px;background:#3d87ab;"></div>
<div class="t" style="left:1494.0px;top:883.8px;font-size:27px;color:#474e55;font-weight:400;letter-spacing:-0.07px;">Add</div>
<div style="position:absolute;left:1565.4px;top:879.9px;width:33.2px;height:33.2px;border:2.1px solid #ebb3b7;border-radius:50%;box-sizing:border-box;"></div>
<div style="position:absolute;left:1574px;top:895.4px;width:16px;height:2.2px;background:#ebb3b7;"></div>
<div class="t" style="left:1605.6px;top:883.8px;font-size:27px;color:#a7aaad;font-weight:400;letter-spacing:0.24px;">Delete</div>
<div style="position:absolute;left:585px;top:941px;width:846px;height:267px;border:2px solid #c5c8cb;box-sizing:border-box;background:#fff;"></div>
<div style="position:absolute;left:587px;top:943px;width:842px;height:53px;background:#eceded;"></div>
<div style="position:absolute;left:587px;top:996px;width:842px;height:2px;background:#c5c8cb;"></div>
<div style="position:absolute;left:643px;top:943px;width:2px;height:52px;background:#9aa0a5;"></div>
<div style="position:absolute;left:1425px;top:943px;width:2px;height:52px;background:#a3a8ac;"></div>
<div style="position:absolute;left:601px;top:950px;width:30px;height:31.5px;border:3px solid #2b91c7;border-radius:4px;box-sizing:border-box;"></div>
<div class="t" style="left:656.2px;top:958.1px;font-size:21.5px;color:#262c33;font-weight:400;letter-spacing:0.22px;-webkit-text-stroke:0.7px #262c33;">SYSLOG</div>
<svg style="position:absolute;left:763.2px;top:960px;" width="24" height="16" viewBox="0 0 24 16"><polyline fill="none" stroke="#979ca0" stroke-width="2.2" points="1.5,12.5 11.5,2.5 21.5,12.5"/></svg>
<div style="position:absolute;left:587px;top:1146px;width:842px;height:1px;background:#cfd2d4;"></div>
<div style="position:absolute;left:587px;top:1147px;width:842px;height:59px;background:#f4f5f5;border-radius:0 0 6px 6px;"></div>
<div style="position:absolute;left:601px;top:1156.9px;width:33.2px;height:33.2px;border:2.3px solid #3d87ab;border-radius:50%;box-sizing:border-box;"></div>
<div style="position:absolute;left:609.8px;top:1172.4px;width:15.2px;height:2.2px;background:#3d87ab;"></div>
<div style="position:absolute;left:616.5px;top:1165.8px;width:2.2px;height:15.2px;background:#3d87ab;"></div>
<div class="t" style="left:642.0px;top:1160.8px;font-size:27px;color:#474e55;font-weight:400;letter-spacing:-0.07px;">Add</div>
<div style="position:absolute;left:713.4px;top:1156.9px;width:33.2px;height:33.2px;border:2.1px solid #ebb3b7;border-radius:50%;box-sizing:border-box;"></div>
<div style="position:absolute;left:722px;top:1172.4px;width:16px;height:2.2px;background:#ebb3b7;"></div>
<div class="t" style="left:753.6px;top:1160.8px;font-size:27px;color:#a7aaad;font-weight:400;letter-spacing:0.24px;">Delete</div>
<div style="position:absolute;left:1437px;top:941px;width:846px;height:267px;border:2px solid #c5c8cb;box-sizing:border-box;background:#fff;"></div>
<div style="position:absolute;left:1439px;top:943px;width:842px;height:53px;background:#eceded;"></div>
<div style="position:absolute;left:1439px;top:996px;width:842px;height:2px;background:#c5c8cb;"></div>
<div style="position:absolute;left:1495px;top:943px;width:2px;height:52px;background:#9aa0a5;"></div>
<div style="position:absolute;left:2277px;top:943px;width:2px;height:52px;background:#a3a8ac;"></div>
<div style="position:absolute;left:1453px;top:950px;width:30px;height:31.5px;border:3px solid #2b91c7;border-radius:4px;box-sizing:border-box;"></div>
<div class="t" style="left:1507.5px;top:958.1px;font-size:21.5px;color:#262c33;font-weight:400;letter-spacing:2.03px;-webkit-text-stroke:0.7px #262c33;">HTTP</div>
<svg style="position:absolute;left:1587.6px;top:960px;" width="24" height="16" viewBox="0 0 24 16"><polyline fill="none" stroke="#979ca0" stroke-width="2.2" points="1.5,12.5 11.5,2.5 21.5,12.5"/></svg>
<div style="position:absolute;left:1439px;top:1146px;width:842px;height:1px;background:#cfd2d4;"></div>
<div style="position:absolute;left:1439px;top:1147px;width:842px;height:59px;background:#f4f5f5;border-radius:0 0 6px 6px;"></div>
<div style="position:absolute;left:1453px;top:1156.9px;width:33.2px;height:33.2px;border:2.3px solid #3d87ab;border-radius:50%;box-sizing:border-box;"></div>
<div style="position:absolute;left:1461.8px;top:1172.4px;width:15.2px;height:2.2px;background:#3d87ab;"></div>
<div style="position:absolute;left:1468.5px;top:1165.8px;width:2.2px;height:15.2px;background:#3d87ab;"></div>
<div class="t" style="left:1494.0px;top:1160.8px;font-size:27px;color:#474e55;font-weight:400;letter-spacing:-0.07px;">Add</div>
<div style="position:absolute;left:1565.4px;top:1156.9px;width:33.2px;height:33.2px;border:2.1px solid #ebb3b7;border-radius:50%;box-sizing:border-box;"></div>
<div style="position:absolute;left:1574px;top:1172.4px;width:16px;height:2.2px;background:#ebb3b7;"></div>
<div class="t" style="left:1605.6px;top:1160.8px;font-size:27px;color:#a7aaad;font-weight:400;letter-spacing:0.24px;">Delete</div>
</body></html>
